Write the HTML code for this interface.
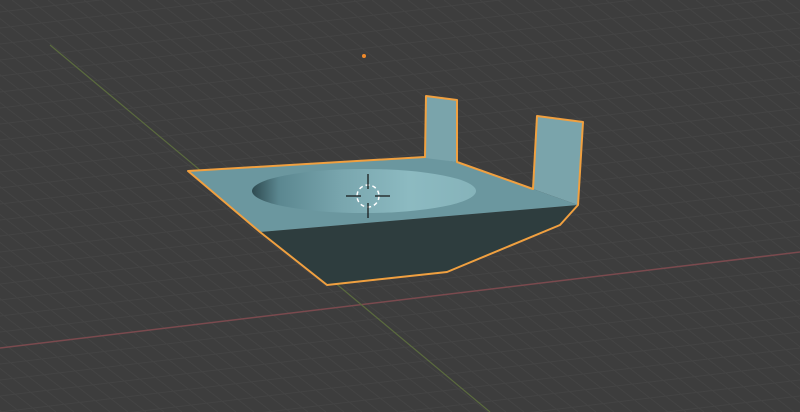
<!DOCTYPE html>
<html><head><style>
html,body{margin:0;padding:0;background:#3d3d3d;overflow:hidden;width:800px;height:412px}
svg{display:block}
</style></head><body>
<svg id="s" width="800" height="412" viewBox="0 0 800 412" xmlns="http://www.w3.org/2000/svg">
<defs>
<linearGradient id="bw" x1="0" x2="1" y1="0" y2="0">
<stop offset="0" stop-color="#2e4a50"/>
<stop offset="0.12" stop-color="#5b8790"/>
<stop offset="0.4" stop-color="#79a6ae"/>
<stop offset="0.7" stop-color="#8cbac1"/>
<stop offset="1" stop-color="#86b3ba"/>
</linearGradient>
</defs>
<rect width="800" height="412" fill="#3d3d3d"/>
<g id="grid" stroke="#444" stroke-width="1"></g>
<line x1="0" y1="348" x2="800" y2="252" stroke="#7a4a4e" stroke-width="1.5"/>
<line x1="50" y1="45" x2="490" y2="412" stroke="#5a6a3e" stroke-width="1.2"/>
<polygon points="260,232 578,205 560,225 447,272 327,285" fill="#2e3d3e"/>
<polygon points="188,171 425,157 457,162 533,189 578,205 260,232" fill="#6b979f"/>
<ellipse cx="364" cy="191" rx="112" ry="22" fill="url(#bw)"/>
<polygon points="426,96 457,100 457,162 425,158" fill="#7aa4ab"/>
<polygon points="537,116 583,122 578,205 533,189" fill="#7aa4ab"/>
<polygon points="188,171 425,157 426,96 457,100 457,162 533,189 537,116 583,122 578,205 560,225 447,272 327,285 260,232" fill="none" stroke="#f0a040" stroke-width="2" stroke-linejoin="round"/>
<circle cx="368" cy="196" r="11" fill="none" stroke="#fff" stroke-width="1.5" stroke-dasharray="4 3"/>
<line x1="346" y1="196" x2="361" y2="196" stroke="#111" stroke-width="1.2"/>
<line x1="375" y1="196" x2="390" y2="196" stroke="#111" stroke-width="1.2"/>
<line x1="368" y1="174" x2="368" y2="189" stroke="#111" stroke-width="1.2"/>
<line x1="368" y1="203" x2="368" y2="218" stroke="#111" stroke-width="1.2"/>
<circle cx="364" cy="56" r="2" fill="#f08a2a"/>
</svg>
<script>
var g=document.getElementById('grid'),ns='http://www.w3.org/2000/svg';
function L(a,b,c,d){var l=document.createElementNS(ns,'line');l.setAttribute('x1',a);l.setAttribute('y1',b);l.setAttribute('x2',c);l.setAttribute('y2',d);g.appendChild(l);}
for(var y=-100;y<520;y+=16){L(0,y,800,y-96);}
for(var x=-600;x<900;x+=18){L(x,0,x+530,412);}
</script>
</body></html>
